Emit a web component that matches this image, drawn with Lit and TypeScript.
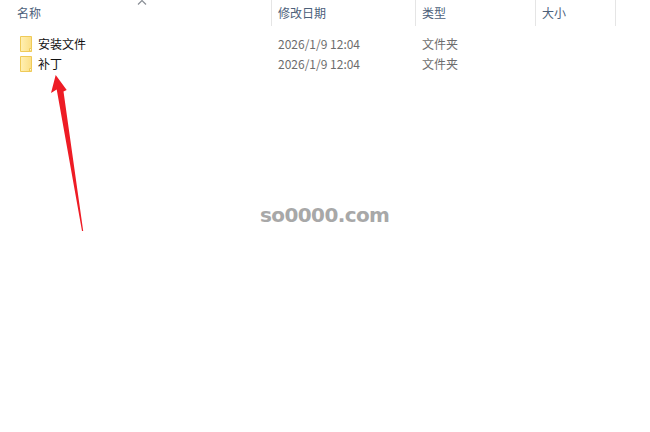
import { LitElement, html, css, svg } from "lit";
import { customElement } from "lit/decorators.js";

const folder = svg`<svg class="folder" width="16" height="16" viewBox="0 0 16 16">
  <defs><linearGradient id="f" x1="0" x2="1" y1="0" y2="0">
    <stop offset="0" stop-color="#fff0b4"/><stop offset="1" stop-color="#fbdf86"/>
  </linearGradient></defs>
  <path d="M2.5 .5H13.5V15.5H2.5Z" fill="url(#f)" stroke="#efca58"/>
  <path d="M11.5 15V12.5H13.5V15Z" fill="#fff6d2" stroke="#efca58" stroke-width="1"/>
</svg>`;

const rows = [
  { name: "安装文件", date: "2026/1/9 12:04", type: "文件夹" },
  { name: "补丁", date: "2026/1/9 12:04", type: "文件夹" },
];

@customElement("app-root")
export class AppRoot extends LitElement {
  static styles = css`
    :host {
      display: block;
      position: relative;
      width: 650px;
      height: 432px;
      overflow: hidden;
      background: #fff;
      font-family: "Noto Sans CJK SC", "Liberation Sans", sans-serif;
      font-size: 12px;
    }
    .head, .row {
      display: grid;
      grid-template-columns: 272px 144px 120px 80px;
    }
    .head { height: 26px; }
    .head div {
      padding-left: 6px;
      line-height: 26px;
      color: #4c607a;
      border-right: 1px solid #e5e5e5;
    }
    .head div:first-child { padding-left: 17px; }
    .list { padding-top: 7px; }
    .row { height: 20px; line-height: 20px; color: #6d6d6d; }
    .row:first-child { height: 21px; line-height: 21px; }
    .row > div { padding-left: 6px; white-space: nowrap; }
    .row .name {
      display: flex;
      align-items: center;
      gap: 4px;
      padding-left: 18px;
      color: #111;
    }
    .watermark {
      position: absolute;
      left: 260px;
      top: 203px;
      font-family: "DejaVu Sans", sans-serif;
      font-weight: 700;
      font-size: 20px;
      line-height: 24px;
      color: #a8a8a8;
      letter-spacing: -0.6px;
    }
    .overlay { position: absolute; left: 0; top: 0; pointer-events: none; }
  `;

  render() {
    return html`
      <div class="head">
        <div>名称</div><div>修改日期</div><div>类型</div><div>大小</div>
      </div>
      <div class="list">
        ${rows.map(
          (r) => html`<div class="row">
            <div class="name">${folder}<span>${r.name}</span></div>
            <div>${r.date}</div>
            <div>${r.type}</div>
          </div>`
        )}
      </div>
      <div class="watermark">so0000.com</div>
      <svg class="overlay" width="650" height="432" viewBox="0 0 650 432">
        <path d="M138 4.5L142 .5L146 4.5" fill="none" stroke="#8a8f96" stroke-width="1.2"/>
        <path d="M55.7 75L51 93L56.7 89.5L82 231L83.2 231L63.5 91.5L66.7 90Z" fill="#ee1c25"/>
      </svg>
    `;
  }
}
